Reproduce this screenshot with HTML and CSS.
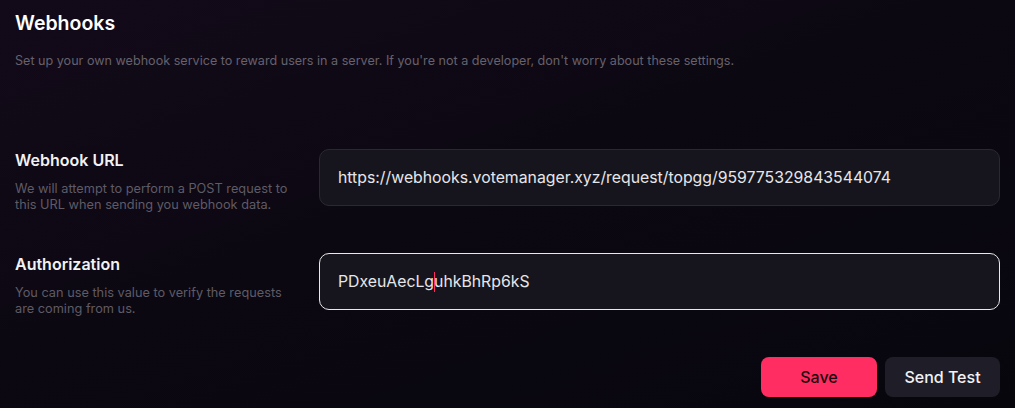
FILE: index.html
```html
<!DOCTYPE html>
<html>
<head>
<meta charset="utf-8">
<link rel="stylesheet" href="styles.css">
</head>
<body>
<div class="page">
  <header class="head">
    <h1 class="title">Webhooks</h1>
    <p class="sub">Set up your own webhook service to reward users in a server. If you're not a developer, don't worry about these settings.</p>
  </header>
  <section class="form">
    <div class="row">
      <div class="info">
        <h2 class="label">Webhook URL</h2>
        <p class="desc">We will attempt to perform a POST request to this URL when sending you webhook data.</p>
      </div>
      <div class="field">https://webhooks.votemanager.xyz/request/topgg/959775329843544074</div>
    </div>
    <div class="row">
      <div class="info">
        <h2 class="label">Authorization</h2>
        <p class="desc">You can use this value to verify the requests are coming from us.</p>
      </div>
      <div class="field focused">PDxeuAecLg<span class="caret"></span>uhkBhRp6kS</div>
    </div>
  </section>
  <div class="actions">
    <button class="btn save">Save</button>
    <button class="btn test">Send Test</button>
  </div>
</div>
</body>
</html>
```

FILE: styles.css
```css
* { box-sizing: border-box; }
html, body { margin: 0; height: 100%; }
body {
  background: linear-gradient(160deg, #130a19 0%, #0c0812 45%, #07060d 100%);
  font-family: "Inter", "Noto Sans", sans-serif;
  color: #fff;
  overflow: hidden;
}
.page {
  padding: 10px 15px 0 15px;
}
.title {
  margin: 0;
  font-size: 19.5px;
  line-height: 26px;
  font-weight: 600;
  color: #fff;
}
.sub {
  margin: 17px 0 0 0;
  font-size: 12.6px;
  line-height: 16px;
  color: #65616d;
}
.form {
  margin-top: 80px;
  display: flex;
  flex-direction: column;
  gap: 40px;
}
.row {
  display: grid;
  grid-template-columns: 304px 1fr;
  align-items: start;
}
.info { padding-top: 1px; }
.label {
  margin: 0;
  font-size: 16px;
  line-height: 20px;
  font-weight: 600;
  color: #f2f2f4;
}
.desc {
  margin: 11px 0 0 0;
  width: 276px;
  font-size: 12.75px;
  line-height: 16px;
  color: #5e5b66;
}
.field {
  height: 57px;
  display: flex;
  align-items: center;
  padding: 0 18px;
  background: #16151d;
  border: 1px solid #2a2931;
  border-radius: 10px;
  font-size: 15.8px;
  color: #e6e6ea;
  white-space: nowrap;
}
.field.focused {
  border-color: #e8e8ea;
}
.caret {
  display: inline-block;
  width: 0;
  height: 20px;
  border-left: 1px solid #ff2d62;
  margin: 0 -0.5px;
}
.actions {
  margin-top: 40px;
  display: flex;
  justify-content: flex-end;
  gap: 8px;
}
.btn {
  width: 116px;
  height: 40px;
  border: none;
  border-radius: 8px;
  font-family: "Inter", "Noto Sans", sans-serif;
  font-size: 16px;
  font-weight: 500;
  cursor: pointer;
}
.save {
  background: #ff2d62;
  color: #1b0a10;
}
.test {
  width: 115px;
  background: #1f1e28;
  color: #f2f2f4;
}
```
